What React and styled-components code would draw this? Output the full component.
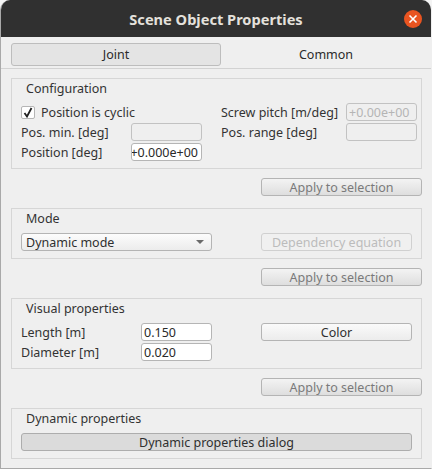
import React from 'react';
import styled, { createGlobalStyle } from 'styled-components';

const GlobalStyle = createGlobalStyle`
  html, body {
    margin: 0;
    padding: 0;
    background: #f4f4f4;
  }
  * {
    box-sizing: border-box;
  }
`;

const Window = styled.div`
  width: 432px;
  height: 469px;
  display: flex;
  flex-direction: column;
  background: #efefef;
  border-radius: 10px 10px 0 0;
  border: 1px solid #a9a9a9;
  border-top: none;
  border-right-color: #efefef;
  overflow: hidden;
  font-family: "Noto Sans", "Open Sans", sans-serif;
  font-size: 12.5px;
  color: #3c3c3c;
`;

const TitleBar = styled.div`
  position: relative;
  height: 37px;
  flex: none;
  margin: 0 -1px;
  display: flex;
  align-items: center;
  justify-content: center;
  background: #303030;
  color: #e4e1dc;
  font-size: 14.6px;
  font-weight: 700;
`;

const CloseButton = styled.div`
  position: absolute;
  right: 10px;
  top: 10px;
  width: 18px;
  height: 18px;
  border-radius: 50%;
  background: #e95420;
  display: flex;
  align-items: center;
  justify-content: center;
`;

const TabBar = styled.div`
  height: 32px;
  flex: none;
  padding: 6px 0 2px 10px;
  display: flex;
  border-bottom: 1px solid #d2d2d2;
`;

const Tab = styled.div`
  width: 210px;
  height: 23px;
  display: flex;
  align-items: center;
  justify-content: center;
  color: #2a2a2a;
  border-radius: 3px;
  border: 1px solid ${(p) => (p.$active ? '#bdbdbd' : 'transparent')};
  background: ${(p) => (p.$active ? '#e4e4e4' : 'transparent')};
`;

const Content = styled.div`
  padding: 9px 9px 0 10px;
  display: flex;
  flex-direction: column;
`;

const Group = styled.div`
  border: 1px solid #d6d6d6;
  padding: 0 4px 7px 9px;
`;

const GroupTitle = styled.div`
  height: 18px;
  line-height: 20px;
  margin: 0 0 6px 5px;
  color: #333;
`;

const ApplyRow = styled.div`
  display: flex;
  justify-content: flex-end;
  margin: 9px 0 12px;
`;

const Columns = styled.div`
  display: flex;
  gap: 19px;
`;

const Column = styled.div`
  width: ${(p) => p.$width}px;
  display: flex;
  flex-direction: column;
  gap: 2px;
`;

const Row = styled.div`
  height: 18px;
  display: flex;
  align-items: center;
  justify-content: space-between;
`;

const Label = styled.span`
  white-space: nowrap;
  color: #333;
`;

const CheckLabel = styled.label`
  display: flex;
  align-items: center;
  gap: 6px;
  color: #333;
`;

const CheckBox = styled.span`
  width: 14px;
  height: 13px;
  display: flex;
  align-items: center;
  justify-content: center;
  background: #fff;
  border: 1px solid #b5b5b5;
  border-radius: 2px;
`;

const Field = styled.div`
  width: 71px;
  height: 18px;
  padding: 0 3px 0 2px;
  display: flex;
  align-items: center;
  overflow: hidden;
  white-space: nowrap;
  border-radius: 3px;
  border: 1px solid ${(p) => (p.$disabled ? '#c2c2c2' : '#b5b5b5')};
  background: ${(p) => (p.$disabled ? '#efefef' : '#fff')};
  color: ${(p) => (p.$disabled ? '#b5b5b5' : '#2a2a2a')};
  justify-content: ${(p) => (p.$start ? 'flex-start' : 'flex-end')};
`;

const Button = styled.div`
  width: 151px;
  height: 18px;
  display: flex;
  align-items: center;
  justify-content: center;
  border-radius: 3px;
  border: 1px solid #b4b4b4;
  background: linear-gradient(#fafafa, #ececec);
  color: #2f2f2f;
`;

const ApplyButton = styled(Button)`
  width: 161px;
  background: linear-gradient(#f3f3f3, #dedede);
  color: #7a7a7a;
`;

const DisabledButton = styled(Button)`
  border-color: #d0d0d0;
  background: #f0f0f0;
  color: #bcbcbc;
`;

const DialogButton = styled(Button)`
  width: 391px;
  border-color: #adadad;
  background: #dbdbdb;
`;

const Select = styled.div`
  width: 191px;
  height: 18px;
  padding: 0 4px;
  display: flex;
  align-items: center;
  justify-content: space-between;
  border-radius: 3px;
  border: 1px solid #b4b4b4;
  background: linear-gradient(#fcfcfc, #ececec);
  color: #2f2f2f;
`;

const Caret = styled.span`
  width: 0;
  height: 0;
  margin-right: 3px;
  border-left: 4px solid transparent;
  border-right: 4px solid transparent;
  border-top: 4px solid #6a6a6a;
`;

const SplitRow = styled.div`
  display: flex;
  justify-content: space-between;
  align-items: flex-start;
  padding-right: 5px;
`;

const App = () => (
  <>
    <GlobalStyle />
    <Window>
      <TitleBar>
        Scene Object Properties
        <CloseButton>
          <svg width="10" height="10" viewBox="0 0 10 10">
            <path d="M1.5 1.5 L8.5 8.5 M8.5 1.5 L1.5 8.5" stroke="#fff" strokeWidth="1.6" />
          </svg>
        </CloseButton>
      </TitleBar>
      <TabBar>
        <Tab $active>Joint</Tab>
        <Tab>Common</Tab>
      </TabBar>
      <Content>
        <Group>
          <GroupTitle>Configuration</GroupTitle>
          <Columns>
            <Column $width={181}>
              <Row>
                <CheckLabel>
                  <CheckBox>
                    <svg width="10" height="11" viewBox="0 0 10 11">
                      <path d="M1.5 6 L4 9.5 L8.5 1" fill="none" stroke="#222" strokeWidth="1.8" />
                    </svg>
                  </CheckBox>
                  Position is cyclic
                </CheckLabel>
              </Row>
              <Row>
                <Label>Pos. min. [deg]</Label>
                <Field $disabled />
              </Row>
              <Row>
                <Label>Position [deg]</Label>
                <Field>+0.000e+00</Field>
              </Row>
            </Column>
            <Column $width={196}>
              <Row>
                <Label>Screw pitch [m/deg]</Label>
                <Field $disabled $start>+0.00e+00</Field>
              </Row>
              <Row>
                <Label>Pos. range [deg]</Label>
                <Field $disabled />
              </Row>
            </Column>
          </Columns>
        </Group>
        <ApplyRow>
          <ApplyButton>Apply to selection</ApplyButton>
        </ApplyRow>
        <Group>
          <GroupTitle>Mode</GroupTitle>
          <SplitRow>
            <Select>
              Dynamic mode
              <Caret />
            </Select>
            <DisabledButton>Dependency equation</DisabledButton>
          </SplitRow>
        </Group>
        <ApplyRow>
          <ApplyButton>Apply to selection</ApplyButton>
        </ApplyRow>
        <Group>
          <GroupTitle>Visual properties</GroupTitle>
          <SplitRow>
            <Column $width={191}>
              <Row>
                <Label>Length [m]</Label>
                <Field $start>0.150</Field>
              </Row>
              <Row>
                <Label>Diameter [m]</Label>
                <Field $start>0.020</Field>
              </Row>
            </Column>
            <Button>Color</Button>
          </SplitRow>
        </Group>
        <ApplyRow>
          <ApplyButton>Apply to selection</ApplyButton>
        </ApplyRow>
        <Group>
          <GroupTitle>Dynamic properties</GroupTitle>
          <DialogButton>Dynamic properties dialog</DialogButton>
        </Group>
      </Content>
    </Window>
  </>
);

export default App;
